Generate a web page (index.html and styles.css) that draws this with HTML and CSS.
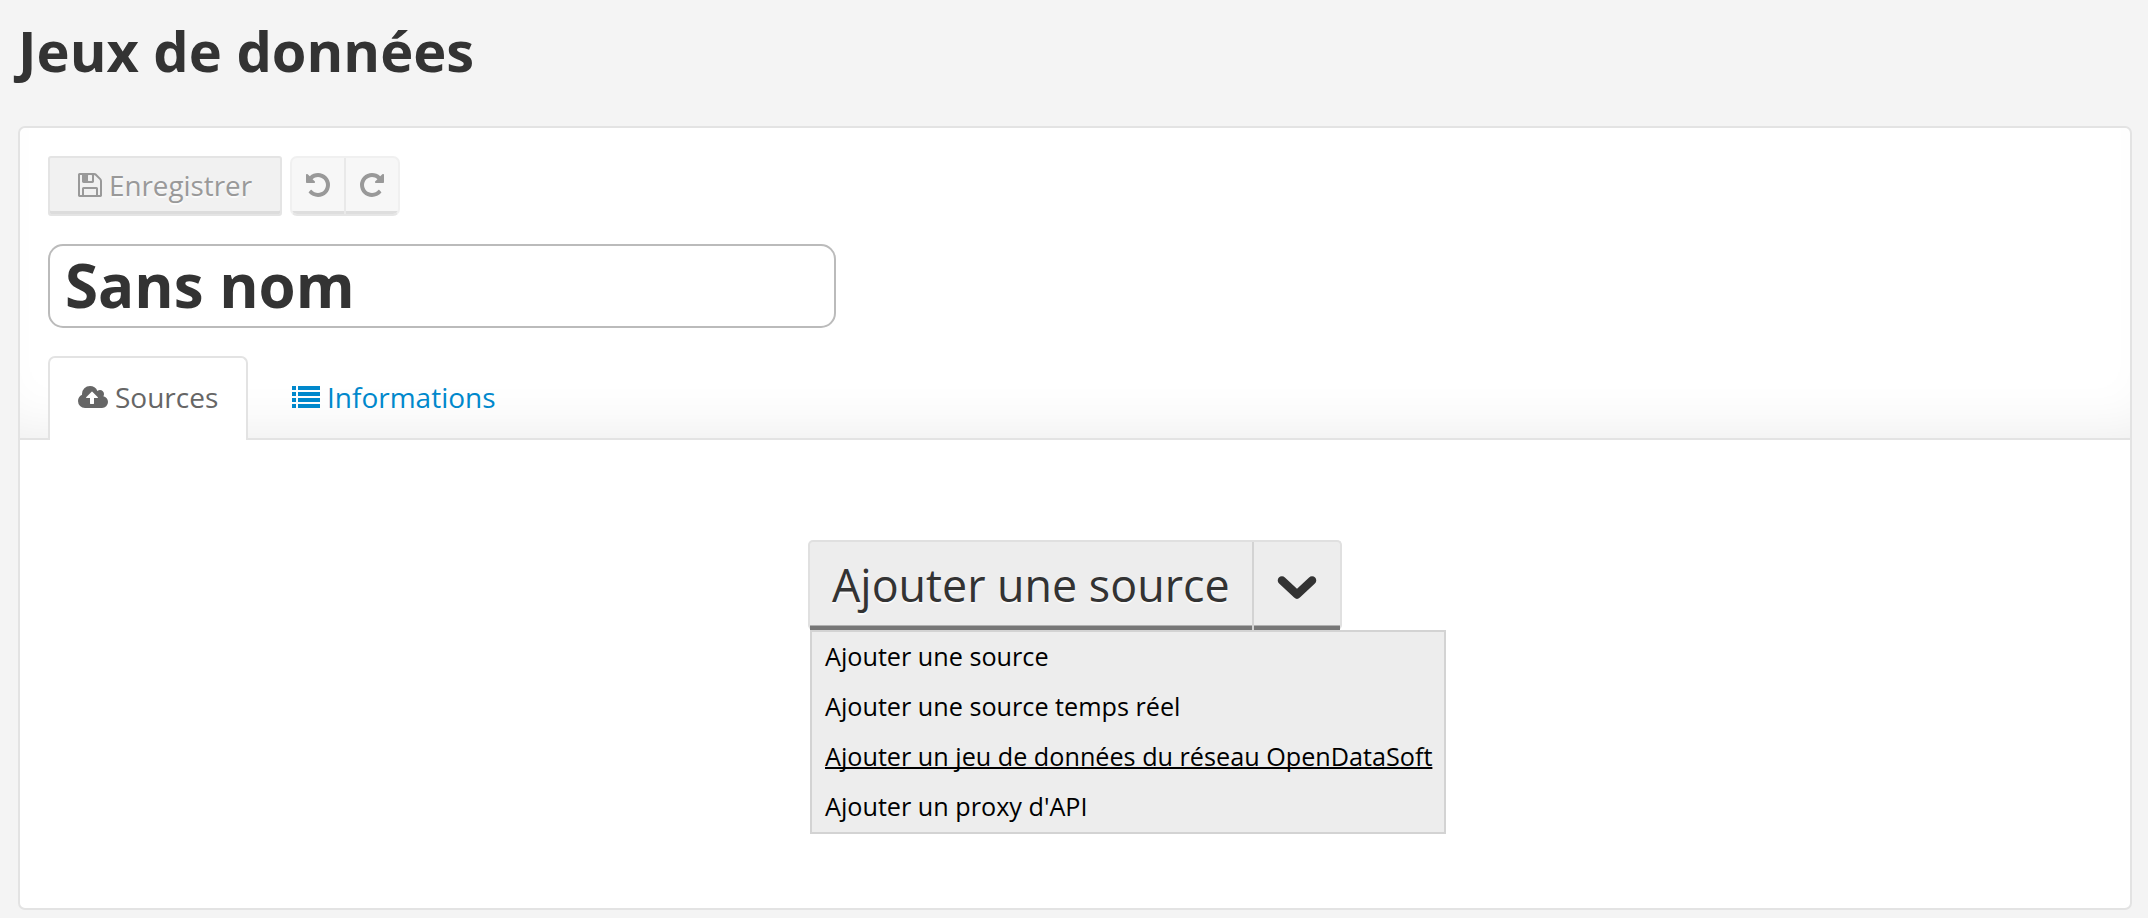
FILE: index.html
```html
<!DOCTYPE html>
<html lang="fr">
<head>
<meta charset="utf-8">
<title>Jeux de données</title>
<link rel="stylesheet" href="styles.css">
</head>
<body>
<h1 class="page-title">Jeux de données</h1>
<main class="panel">
  <header class="panel-head">
    <div class="toolbar">
      <button class="btn btn-save"><svg class="icon-save" viewBox="0 128 1536 1536"><path d="M384 1536h768v-384h-768v384zm896 0h128v-896q0-14-10-38.5t-20-34.5l-281-281q-10-10-34-20t-39-10v416q0 40-28 68t-68 28h-576q-40 0-68-28t-28-68v-416h-128v1280h128v-416q0-40 28-68t68-28h832q40 0 68 28t28 68v416zm-384-928v-320q0-13-9.5-22.5t-22.5-9.5h-192q-13 0-22.5 9.5t-9.5 22.5v320q0 13 9.5 22.5t22.5 9.5h192q13 0 22.5-9.5t9.5-22.5zm640 32v928q0 40-28 68t-68 28h-1344q-40 0-68-28t-28-68v-1344q0-40 28-68t68-28h928q40 0 88 20t76 48l280 280q28 28 48 76t20 88z"/></svg><span>Enregistrer</span></button>
      <div class="history">
        <button class="history-btn" aria-label="Annuler"><svg class="icon-turn" viewBox="128 128 1536 1536"><path d="M1664 896q0 156-61 298t-164 245-245 164-298 61q-172 0-327-72.500t-264-204.500q-7-10-6.500-22.500t8.500-20.500l137-138q10-9 25-9 16 2 23 12 73 95 179 147t225 52q104 0 198.500-40.500t163.500-109.500 109.500-163.500 40.500-198.500-40.500-198.500-109.500-163.500-163.500-109.500-198.500-40.500q-98 0-188 35.500t-160 101.500l137 138q31 30 14 69-17 40-59 40h-448q-26 0-45-19t-19-45v-448q0-42 40-59 39-17 69 14l130 129q107-101 244.500-156.500t284.500-55.500q156 0 298 61t245 164 164 245 61 298z"/></svg></button>
        <button class="history-btn" aria-label="Rétablir"><svg class="icon-turn icon-redo" viewBox="128 128 1536 1536"><path d="M1664 896q0 156-61 298t-164 245-245 164-298 61q-172 0-327-72.500t-264-204.500q-7-10-6.500-22.500t8.500-20.500l137-138q10-9 25-9 16 2 23 12 73 95 179 147t225 52q104 0 198.500-40.500t163.500-109.500 109.500-163.500 40.500-198.500-40.500-198.500-109.500-163.500-163.500-109.500-198.500-40.500q-98 0-188 35.500t-160 101.500l137 138q31 30 14 69-17 40-59 40h-448q-26 0-45-19t-19-45v-448q0-42 40-59 39-17 69 14l130 129q107-101 244.500-156.500t284.500-55.500q156 0 298 61t245 164 164 245 61 298z"/></svg></button>
      </div>
    </div>
    <div class="name-field">Sans nom</div>
    <nav class="tabs">
      <a class="tab tab-active"><svg class="icon-cloud" viewBox="-64 128 1920 1408"><path d="M1216 864q0-14-9-23l-352-352q-9-9-23-9t-23 9l-351 351q-10 12-10 24 0 14 9 23t23 9h224v352q0 13 9.500 22.500t22.500 9.500h192q13 0 22.500-9.500t9.500-22.500v-352h224q13 0 22.500-9.500t9.500-22.500zm640 288q0 159-112.500 271.500t-271.500 112.500h-1088q-185 0-316.500-131.500t-131.500-316.500q0-130 70-240t188-165q-2-30-2-43 0-212 150-362t362-150q156 0 285.500 87t188.500 231q71-62 166-62 106 0 181 75t75 181q0 76-41 138 130 31 213.500 135.500t83.500 238.500z"/></svg><span>Sources</span></a>
      <a class="tab"><svg class="icon-list" viewBox="0 0 28 22"><path d="M0 0h4v4H0zM6 0h22v4H6zM0 6h4v4H0zM6 6h22v4H6zM0 12h4v4H0zM6 12h22v4H6zM0 18h4v4H0zM6 18h22v4H6z"/></svg><span>Informations</span></a>
    </nav>
  </header>
  <section class="panel-body">
    <div class="split">
      <button class="split-main">Ajouter une source</button>
      <button class="split-toggle" aria-label="Ouvrir le menu"><svg class="icon-chevron" viewBox="0 0 40 26"><path d="M5 5.500L20 19.500L35 5.500"/></svg></button>
      <ul class="menu">
        <li>Ajouter une source</li>
        <li>Ajouter une source temps réel</li>
        <li class="hovered">Ajouter un jeu de données du réseau OpenDataSoft</li>
        <li>Ajouter un proxy d'API</li>
      </ul>
    </div>
  </section>
</main>
</body>
</html>
```
FILE: styles.css
```css
* { box-sizing: border-box; }
body {
  margin: 0;
  height: 918px;
  padding: 0 16px 8px 18px;
  background: #f4f4f4;
  color: #333;
  font-family: "Open Sans", sans-serif;
  display: flex;
  flex-direction: column;
  overflow: hidden;
}
button {
  margin: 0;
  padding: 0;
  font: inherit;
  color: inherit;
}
svg { display: block; fill: currentColor; flex: none; }
.page-title {
  margin: 0;
  height: 126px;
  font-size: 56px;
  line-height: 100px;
  font-weight: 700;
  white-space: nowrap;
}
.panel {
  flex: 1;
  display: flex;
  flex-direction: column;
  background: #fff;
  border: 2px solid #e3e3e3;
  border-radius: 7px;
}
.panel-head {
  height: 312px;
  padding: 28px 28px 0;
  border-bottom: 2px solid #e3e3e3;
  border-radius: 5px 5px 0 0;
  box-shadow: inset 0 -40px 60px -40px rgba(0, 0, 0, .09);
}
.toolbar { display: flex; gap: 8px; color: #999; }
.btn-save {
  width: 234px;
  height: 60px;
  padding: 0 0 2px 28px;
  display: flex;
  align-items: center;
  gap: 7px;
  font-size: 27.8px;
  line-height: 56px;
  background: #f1f1f1;
  border: 2px solid #e4e4e4;
  border-radius: 3px;
  box-shadow: inset 0 -3px 0 #dcdcdc;
  text-shadow: 0 2px 0 #fafafa;
}
.icon-save { width: 24px; height: 24px; }
.history {
  display: flex;
  width: 110px;
  height: 60px;
  border: 2px solid #f0f0f0;
  border-bottom-color: #e6e6e6;
  border-radius: 7px;
  background: #f7f7f7;
  overflow: hidden;
}
.history-btn {
  flex: 1;
  padding-bottom: 2px;
  display: flex;
  align-items: center;
  justify-content: center;
  border: 0;
  background: none;
  box-shadow: inset 0 -3px 0 #dedede;
}
.history-btn + .history-btn { border-left: 2px solid #e9e9e9; }
.icon-turn { width: 24px; height: 24px; }
.icon-redo { transform: scaleX(-1); }
.name-field {
  width: 788px;
  height: 84px;
  margin-top: 28px;
  padding-left: 15px;
  font-size: 60px;
  line-height: 78px;
  font-weight: 700;
  background: #fff;
  border: 2px solid #bbb;
  border-radius: 15px;
}
.tabs { display: flex; margin-top: 28px; gap: 14px; }
.tab {
  height: 84px;
  padding: 0 28px 4px;
  display: flex;
  align-items: center;
  gap: 7px;
  border: 2px solid transparent;
  border-bottom: 0;
  font-size: 28px;
  line-height: 38px;
  color: #0088cc;
}
.tab-active {
  width: 200px;
  color: #666;
  background: #fff;
  border-color: #e3e3e3;
  border-radius: 7px 7px 0 0;
}
.icon-cloud { width: 30px; height: 22px; }
.icon-list { width: 28px; height: 22px; }
.panel-body {
  flex: 1;
  padding-top: 100px;
  display: flex;
  justify-content: center;
  align-items: flex-start;
}
.split {
  position: relative;
  width: 534px;
  height: 90px;
  display: flex;
  background: #ededed;
  border: 2px solid #e0e0e0;
  border-bottom: 0;
  border-radius: 5px;
}
.split-main,
.split-toggle {
  display: flex;
  align-items: center;
  border: 0;
  background: none;
  box-shadow: inset 0 -4px 0 #777, inset 0 -5px 0 #b0b0b0;
}
.split-main {
  width: 442px;
  padding: 0 0 2px 22px;
  font-size: 44.8px;
  line-height: 80px;
  white-space: nowrap;
  text-shadow: 0 2px 0 #fafafa;
}
.split-toggle {
  flex: 1;
  justify-content: center;
  padding-top: 4px;
  border-left: 2px solid #d3d3d3;
}
.icon-chevron {
  width: 40px;
  height: 26px;
  fill: none;
  stroke: currentColor;
  stroke-width: 8.5;
  stroke-linecap: round;
  stroke-linejoin: round;
}
.menu {
  position: absolute;
  left: 0;
  top: 88px;
  width: 636px;
  margin: 0;
  padding: 0;
  list-style: none;
  background: #ededed;
  border: 2px solid #d3d3d3;
  color: #000;
  font-size: 25.2px;
  line-height: 49px;
  white-space: nowrap;
}
.menu li { padding-left: 13px; height: 50px; }
.menu .hovered {
  text-decoration: underline;
  text-decoration-thickness: 2px;
  text-decoration-skip-ink: none;
}
```
